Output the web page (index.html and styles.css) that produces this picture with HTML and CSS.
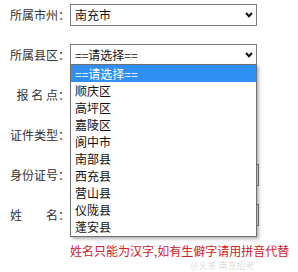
FILE: index.html
```html
<!DOCTYPE html>
<html lang="zh-CN">
<head>
<meta charset="utf-8">
<link rel="stylesheet" href="styles.css">
</head>
<body>
<div class="form">
  <div class="row">
    <label class="lbl">所属市州：</label>
    <div class="sel"><span class="val">南充市</span><svg class="chev" width="8" height="6" viewBox="0 0 8 6"><polyline points="1,1 4,4.2 7,1" fill="none" stroke="#111" stroke-width="2"/></svg></div>
  </div>
  <div class="row">
    <label class="lbl">所属县区：</label>
    <div class="sel">
      <span class="val">==请选择==</span><svg class="chev" width="8" height="6" viewBox="0 0 8 6"><polyline points="1,1 4,4.2 7,1" fill="none" stroke="#111" stroke-width="2"/></svg>
      <ul class="dropdown">
        <li class="on">==请选择==</li>
        <li>顺庆区</li>
        <li>高坪区</li>
        <li>嘉陵区</li>
        <li>阆中市</li>
        <li>南部县</li>
        <li>西充县</li>
        <li>营山县</li>
        <li>仪陇县</li>
        <li>蓬安县</li>
      </ul>
    </div>
  </div>
  <div class="row">
    <label class="lbl">报 名 点：</label>
    <div class="sel"></div>
  </div>
  <div class="row">
    <label class="lbl">证件类型：</label>
    <div class="sel"></div>
  </div>
  <div class="row">
    <label class="lbl">身份证号：</label>
    <div class="inp"></div>
  </div>
  <div class="row">
    <label class="lbl">姓　　名：</label>
    <div class="inp"></div>
  </div>
  <div class="hint">姓名只能为汉字,如有生僻字请用拼音代替</div>
  <div class="mark">@头条 南充招考</div>
</div>
</body>
</html>
```
FILE: styles.css
```css
html, body {
  margin: 0;
  padding: 0;
  background: #fff;
}
body {
  width: 298px;
  height: 272px;
  overflow: hidden;
  font-family: "Noto Sans CJK SC", "Noto Sans", sans-serif;
  font-size: 12px;
  color: #333;
}
.form {
  position: relative;
  padding: 4px 0 0 9px;
  display: flex;
  flex-direction: column;
  gap: 18px;
}
.row {
  display: flex;
  align-items: center;
  height: 22px;
}
.lbl {
  width: 61px;
  text-align: right;
  line-height: 14px;
  white-space: pre;
  color: #333;
}
.sel {
  position: relative;
  box-sizing: border-box;
  width: 187px;
  height: 22px;
  border: 1px solid #7f7f7f;
  background: #fff;
  display: flex;
  align-items: center;
  justify-content: space-between;
  padding: 0 3px 0 4px;
  color: #111;
}
.val {
  line-height: 14px;
}
.inp {
  box-sizing: border-box;
  width: 189px;
  height: 22px;
  border: 1px solid #7f7f7f;
  background: #fff;
}
.dropdown {
  position: absolute;
  left: -1px;
  top: 19px;
  width: 187px;
  box-sizing: border-box;
  margin: 0;
  padding: 0 0 1px 0;
  list-style: none;
  background: #fff;
  border: 1px solid #6f6f6f;
  box-shadow: 2px 2px 3px rgba(0, 0, 0, 0.3);
  z-index: 5;
}
.dropdown li {
  height: 17px;
  line-height: 17px;
  padding-left: 4px;
  color: #111;
}
.dropdown li.on {
  background: #2f8ff2;
  color: #fff;
}
.hint {
  margin-left: 61px;
  line-height: 14px;
  color: #d02028;
  white-space: nowrap;
}
.mark {
  position: absolute;
  left: 190px;
  top: 261px;
  font-size: 9px;
  line-height: 10px;
  color: rgba(150, 150, 150, 0.35);
  white-space: nowrap;
}
```
